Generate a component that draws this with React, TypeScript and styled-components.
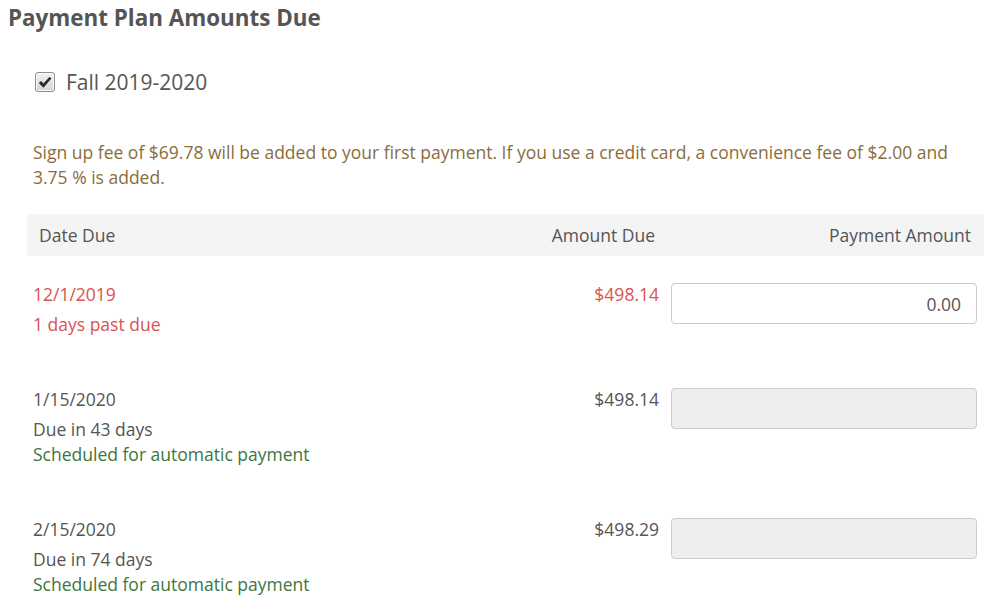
import React, { useState } from 'react';
import styled, { createGlobalStyle } from 'styled-components';

const GlobalStyle = createGlobalStyle`
  body {
    margin: 0;
    background: #fff;
    font-family: "Open Sans", "Noto Sans", Arial, sans-serif;
    color: #555;
  }
`;

const Page = styled.div`
  width: 1003px;
  padding: 0 19px 0 8px;
  box-sizing: border-box;
`;

const Title = styled.h3`
  margin: 0;
  padding-top: 3px;
  font-size: 22.4px;
  font-weight: 700;
  line-height: 30px;
  color: #555;
`;

const TermRow = styled.label`
  display: flex;
  align-items: center;
  gap: 11px;
  margin: 35px 0 0 27px;
  font-size: 21px;
  line-height: 28px;
  color: #555;
  cursor: pointer;
`;

const CheckBox = styled.span<{ $checked: boolean }>`
  width: 18px;
  height: 18px;
  border: 1px solid #8c8c8c;
  border-radius: 3px;
  background: linear-gradient(#f2f2f2, #d4d4d4);
  box-shadow: inset 0 0 0 1px #fbfbfb;
  display: flex;
  align-items: center;
  justify-content: center;

  svg {
    visibility: ${({ $checked }) => ($checked ? 'visible' : 'hidden')};
  }
`;

const Notice = styled.p`
  margin: 44px 0 0 25px;
  font-size: 17.5px;
  line-height: 25px;
  color: #8a6d3b;
`;

const Table = styled.div`
  margin: 24px 0 0 19px;
`;

const HeadRow = styled.div`
  display: grid;
  grid-template-columns: 1fr 200px 316px;
  height: 42px;
  align-items: center;
  background: #f4f4f4;
  font-size: 17.5px;
`;

const HeadCell = styled.div<{ $align?: 'left' | 'right' }>`
  padding: 0 13px 0 12px;
  text-align: ${({ $align }) => $align || 'left'};
  color: #555;
`;

const Row = styled.div`
  display: grid;
  grid-template-columns: 1fr 200px 306px;
  column-gap: 12px;
  padding: 26px 7px 24px 6px;
  font-size: 17.5px;
  line-height: 25px;
  align-items: start;
`;

const DateCol = styled.div`
  display: flex;
  flex-direction: column;
`;

const Line = styled.div<{ $tone?: 'danger' | 'success' | 'muted'; $gap?: boolean }>`
  color: ${({ $tone }) =>
    $tone === 'danger' ? '#d9534f' : $tone === 'success' ? '#3c763d' : '#555'};
  margin-bottom: ${({ $gap }) => ($gap ? '5px' : '0')};
`;

const Amount = styled.div<{ $danger?: boolean }>`
  text-align: right;
  color: ${({ $danger }) => ($danger ? '#d9534f' : '#555')};
`;

const AmountInput = styled.input`
  box-sizing: border-box;
  width: 306px;
  height: 41px;
  margin-top: 1px;
  padding: 6px 15px;
  border: 1px solid #ccc;
  border-radius: 4px;
  font-family: inherit;
  font-size: 17.5px;
  color: #555;
  text-align: right;
  background: #fff;
  outline: none;

  &:disabled {
    background: #eee;
  }
`;

const payments = [
  { date: '12/1/2019', status: '1 days past due', amount: '$498.14', pastDue: true, auto: false },
  { date: '1/15/2020', status: 'Due in 43 days', amount: '$498.14', pastDue: false, auto: true },
  { date: '2/15/2020', status: 'Due in 74 days', amount: '$498.29', pastDue: false, auto: true },
];

export default function App() {
  const [checked, setChecked] = useState(true);
  const [value, setValue] = useState('0.00');

  return (
    <Page>
      <GlobalStyle />
      <Title>Payment Plan Amounts Due</Title>
      <TermRow onClick={() => setChecked(c => !c)}>
        <CheckBox $checked={checked}>
          <svg width="14" height="13" viewBox="0 0 14 13">
            <path d="M0.8 7 L3.2 5 L5.4 7.6 L11.6 0.8 L13.4 2.6 L5.4 11.8 Z" fill="#2a2a2a" />
          </svg>
        </CheckBox>
        Fall 2019-2020
      </TermRow>
      <Notice>
        Sign up fee of $69.78 will be added to your first payment. If you use a credit card, a
        convenience fee of $2.00 and 3.75 % is added.
      </Notice>
      <Table>
        <HeadRow>
          <HeadCell>Date Due</HeadCell>
          <HeadCell $align="right">Amount Due</HeadCell>
          <HeadCell $align="right">Payment Amount</HeadCell>
        </HeadRow>
        {payments.map((p, i) => (
          <Row key={p.date}>
            <DateCol>
              <Line $tone={p.pastDue ? 'danger' : 'muted'} $gap>{p.date}</Line>
              <Line $tone={p.pastDue ? 'danger' : 'muted'}>{p.status}</Line>
              {p.auto && <Line $tone="success">Scheduled for automatic payment</Line>}
            </DateCol>
            <Amount $danger={p.pastDue}>{p.amount}</Amount>
            {i === 0 ? (
              <AmountInput value={value} onChange={e => setValue(e.target.value)} />
            ) : (
              <AmountInput disabled />
            )}
          </Row>
        ))}
      </Table>
    </Page>
  );
}
